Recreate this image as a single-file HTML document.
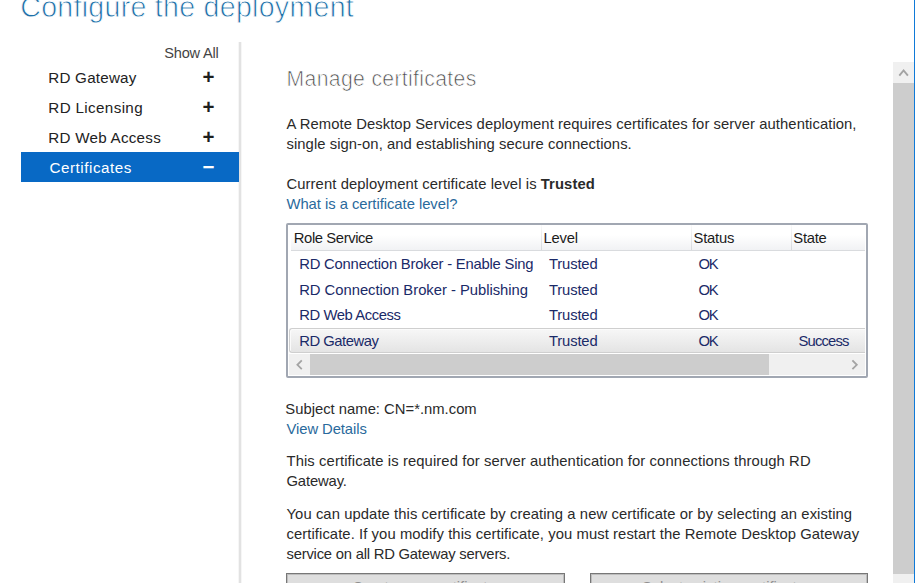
<!DOCTYPE html>
<html lang="en">
<head>
<meta charset="utf-8">
<title>Configure the deployment</title>
<style>
html,body{margin:0;padding:0;background:#fff;}
body{width:915px;height:583px;position:relative;overflow:hidden;font-family:"Liberation Sans", sans-serif;}
.t{position:absolute;white-space:nowrap;margin:0;padding:0;}
.thin{-webkit-text-stroke:0.8px #fff;}
.thin2{-webkit-text-stroke:0.7px #fff;}
.box{position:absolute;box-sizing:border-box;}
b{font-weight:bold;}
.sep{left:238px;top:42px;width:4px;height:541px;background:linear-gradient(90deg,#f6f6f6 0,#f6f6f6 25%,#e2e2e2 25%,#e2e2e2 75%,#f6f6f6 75%);}
.sel{left:21px;top:152px;width:218px;height:30px;background:#0869c5;}
.pm{position:absolute;width:20px;text-align:center;font-weight:bold;line-height:1;color:#1e1e1e;font-size:20.5px;left:198.6px;}
.rb{left:914px;top:0;width:1px;height:583px;background:#0f7ad8;}
.vs{left:893px;top:62px;width:21px;height:521px;background:#f0f0f0;}
.vt{left:893px;top:83px;width:21px;height:491px;background:#cdcdcd;}
.tbl{left:286px;top:223px;width:582px;height:155px;border:2px solid #a1a7b2;border-radius:2px;background:#fff;}
.th{left:291px;top:225px;width:574px;height:26px;background:linear-gradient(#fff 0%,#fff 40%,#f1f2f4 100%);border-bottom:1px solid #d9dbde;}
.cs{top:225px;width:1px;height:25px;background:linear-gradient(#fafafa,#d6d8db);}
.rs{left:289px;top:328px;width:576px;height:25px;border:1px solid #cfcfcf;border-right:none;border-radius:3px 0 0 3px;background:linear-gradient(#f7f7f7,#e4e4e4);box-shadow:inset 1px 1px 0 #fbfbfb;}
.hs{left:289px;top:354px;width:576px;height:21px;background:#f0f0f0;}
.ht{left:310px;top:354px;width:458.5px;height:21px;background:#cdcdcd;}
.btn{top:573px;height:20px;border:1px solid #777;box-shadow:inset 0 0 0 1px #bdbdbd;background:#dedede;}
svg{position:absolute;overflow:visible;}
</style>
</head>
<body>
<header>
<div class="t thin" id="title" style="left:20.3px;top:-9px;font-size:28.6px;line-height:32px;color:#1e6fa8;letter-spacing:0.261px;">Configure the deployment</div>
</header>
<nav>
<div class="box sep"></div>
<div class="box sel"></div>
<div class="pm" style="top:66.5px">+</div>
<div class="pm" style="top:96.5px">+</div>
<div class="pm" style="top:127px">+</div>
<div class="pm" style="top:156.6px;color:#fff">&#8722;</div>
<div class="t" id="showall" style="left:164.3px;top:45px;font-size:14.6px;line-height:16px;color:#444;letter-spacing:-0.229px;">Show All</div>
<div class="t" id="nav1" style="left:48.3px;top:69px;font-size:15.2px;line-height:17px;color:#222;letter-spacing:0.222px;">RD Gateway</div>
<div class="t" id="nav2" style="left:48.3px;top:99px;font-size:15.2px;line-height:17px;color:#222;letter-spacing:0.364px;">RD Licensing</div>
<div class="t" id="nav3" style="left:48.3px;top:129px;font-size:15.2px;line-height:17px;color:#222;letter-spacing:0.250px;">RD Web Access</div>
<div class="t" id="nav4" style="left:49.5px;top:159px;font-size:15.2px;line-height:17px;color:#fff;letter-spacing:0.545px;">Certificates</div>
</nav>
<main>
<div class="box vs"></div>
<div class="box vt"></div>
<svg style="left:893px;top:62px" width="21" height="21" viewBox="0 0 21 21"><path d="M6.3 13.6 L10.6 8.4 L14.9 13.6" fill="none" stroke="#a3a3a3" stroke-width="1.9"/></svg>
<div class="box rb"></div>
<div class="t thin2" id="h2" style="left:286.6px;top:67px;font-size:21.2px;line-height:23px;color:#474747;letter-spacing:0.333px;">Manage certificates</div>
<div class="t" id="p1a" style="left:286.5px;top:116px;font-size:14.8px;line-height:16px;color:#2a2a2a;letter-spacing:0.069px;">A Remote Desktop Services deployment requires certificates for server authentication,</div>
<div class="t" id="p1b" style="left:286.5px;top:136px;font-size:14.8px;line-height:16px;color:#2a2a2a;letter-spacing:0.059px;">single sign-on, and establishing secure connections.</div>
<div class="t" id="p2" style="left:286.5px;top:176px;font-size:14.8px;line-height:16px;color:#2a2a2a;letter-spacing:0.087px;">Current deployment certificate level is <b>Trusted</b></div>
<div class="t" id="l1" style="left:286.5px;top:196px;font-size:14.8px;line-height:16px;color:#2a6a9c;letter-spacing:-0.037px;">What is a certificate level?</div>
<div class="t" id="p3" style="left:285.3px;top:401px;font-size:14.8px;line-height:16px;color:#2a2a2a;letter-spacing:0.008px;">Subject name: CN=*.nm.com</div>
<div class="t" id="l2" style="left:286.5px;top:421px;font-size:14.8px;line-height:16px;color:#2a6a9c;letter-spacing:-0.073px;">View Details</div>
<div class="t" id="p4a" style="left:286.5px;top:453px;font-size:14.8px;line-height:16px;color:#2a2a2a;letter-spacing:0.105px;">This certificate is required for server authentication for connections through RD</div>
<div class="t" id="p4b" style="left:286.5px;top:473px;font-size:14.8px;line-height:16px;color:#2a2a2a;letter-spacing:-0.143px;">Gateway.</div>
<div class="t" id="p5a" style="left:286.5px;top:506px;font-size:14.8px;line-height:16px;color:#2a2a2a;letter-spacing:0.077px;">You can update this certificate by creating a new certificate or by selecting an existing</div>
<div class="t" id="p5b" style="left:286.5px;top:526px;font-size:14.8px;line-height:16px;color:#2a2a2a;letter-spacing:0.078px;">certificate. If you modify this certificate, you must restart the Remote Desktop Gateway</div>
<div class="t" id="p5c" style="left:286.5px;top:546px;font-size:14.8px;line-height:16px;color:#2a2a2a;letter-spacing:-0.218px;">service on all RD Gateway servers.</div>
<section class="grid">
<div class="box tbl"></div>
<div class="box th"></div>
<div class="box cs" style="left:541px"></div>
<div class="box cs" style="left:691px"></div>
<div class="box cs" style="left:791px"></div>
<div class="box rs"></div>
<div class="box hs"></div>
<div class="box ht"></div>
<svg style="left:289px;top:354px" width="21" height="21" viewBox="0 0 21 21"><path d="M12.8 6.4 L8.4 10.8 L12.8 15.2" fill="none" stroke="#a4a4a4" stroke-width="1.8"/></svg>
<svg style="left:844px;top:354px" width="21" height="21" viewBox="0 0 21 21"><path d="M8.4 6.4 L12.8 10.8 L8.4 15.2" fill="none" stroke="#a4a4a4" stroke-width="1.8"/></svg>
<div class="t" id="th1" style="left:293.84px;top:230px;font-size:14.8px;line-height:16px;color:#1c1c1c;letter-spacing:-0.400px;">Role Service</div>
<div class="t" id="th2" style="left:543.48px;top:230px;font-size:14.8px;line-height:16px;color:#1c1c1c;letter-spacing:-0.200px;">Level</div>
<div class="t" id="th3" style="left:693.48px;top:230px;font-size:14.8px;line-height:16px;color:#1c1c1c;letter-spacing:-0.200px;">Status</div>
<div class="t" id="th4" style="left:793.3px;top:230px;font-size:14.8px;line-height:16px;color:#1c1c1c;letter-spacing:-0.250px;">State</div>
<div class="t" id="r0a" style="left:299.2px;top:256px;font-size:14.8px;line-height:16px;color:#1a2a68;letter-spacing:-0.200px;width:234.3px;overflow:hidden;">RD Connection Broker - Enable Single Sign On</div>
<div class="t" id="r0b" style="left:549px;top:256px;font-size:14.8px;line-height:16px;color:#1a2a68;letter-spacing:-0.167px;">Trusted</div>
<div class="t" id="r0c" style="left:698.44px;top:256px;font-size:14.8px;line-height:16px;color:#1a2a68;letter-spacing:-1.200px;">OK</div>
<div class="t" id="r1a" style="left:299.2px;top:282px;font-size:14.8px;line-height:16px;color:#1a2a68;letter-spacing:-0.019px;">RD Connection Broker - Publishing</div>
<div class="t" id="r1b" style="left:549px;top:282px;font-size:14.8px;line-height:16px;color:#1a2a68;letter-spacing:-0.167px;">Trusted</div>
<div class="t" id="r1c" style="left:698.44px;top:282px;font-size:14.8px;line-height:16px;color:#1a2a68;letter-spacing:-1.200px;">OK</div>
<div class="t" id="r2a" style="left:299.2px;top:307px;font-size:14.8px;line-height:16px;color:#1a2a68;letter-spacing:-0.400px;">RD Web Access</div>
<div class="t" id="r2b" style="left:549px;top:307px;font-size:14.8px;line-height:16px;color:#1a2a68;letter-spacing:-0.167px;">Trusted</div>
<div class="t" id="r2c" style="left:698.44px;top:307px;font-size:14.8px;line-height:16px;color:#1a2a68;letter-spacing:-1.200px;">OK</div>
<div class="t" id="r3a" style="left:299.2px;top:333px;font-size:14.8px;line-height:16px;color:#1a2a68;letter-spacing:-0.467px;">RD Gateway</div>
<div class="t" id="r3b" style="left:549px;top:333px;font-size:14.8px;line-height:16px;color:#1a2a68;letter-spacing:-0.167px;">Trusted</div>
<div class="t" id="r3c" style="left:698.44px;top:333px;font-size:14.8px;line-height:16px;color:#1a2a68;letter-spacing:-1.200px;">OK</div>
<div class="t" id="r3d" style="left:798.48px;top:333px;font-size:14.8px;line-height:16px;color:#1a2a68;letter-spacing:-0.833px;">Success</div>
</section>
<section class="actions">
<div class="box btn" style="left:286px;width:279px"></div>
<div class="box btn" style="left:590px;width:278px"></div>
<div class="t" id="b1" style="left:352.4px;top:579px;font-size:14.8px;line-height:16px;color:#8f8f8f;">Create new certificate...</div>
<div class="t" id="b2" style="left:642px;top:579px;font-size:14.8px;line-height:16px;color:#8f8f8f;">Select existing certificate...</div>
</section>
</main>
</body>
</html>
